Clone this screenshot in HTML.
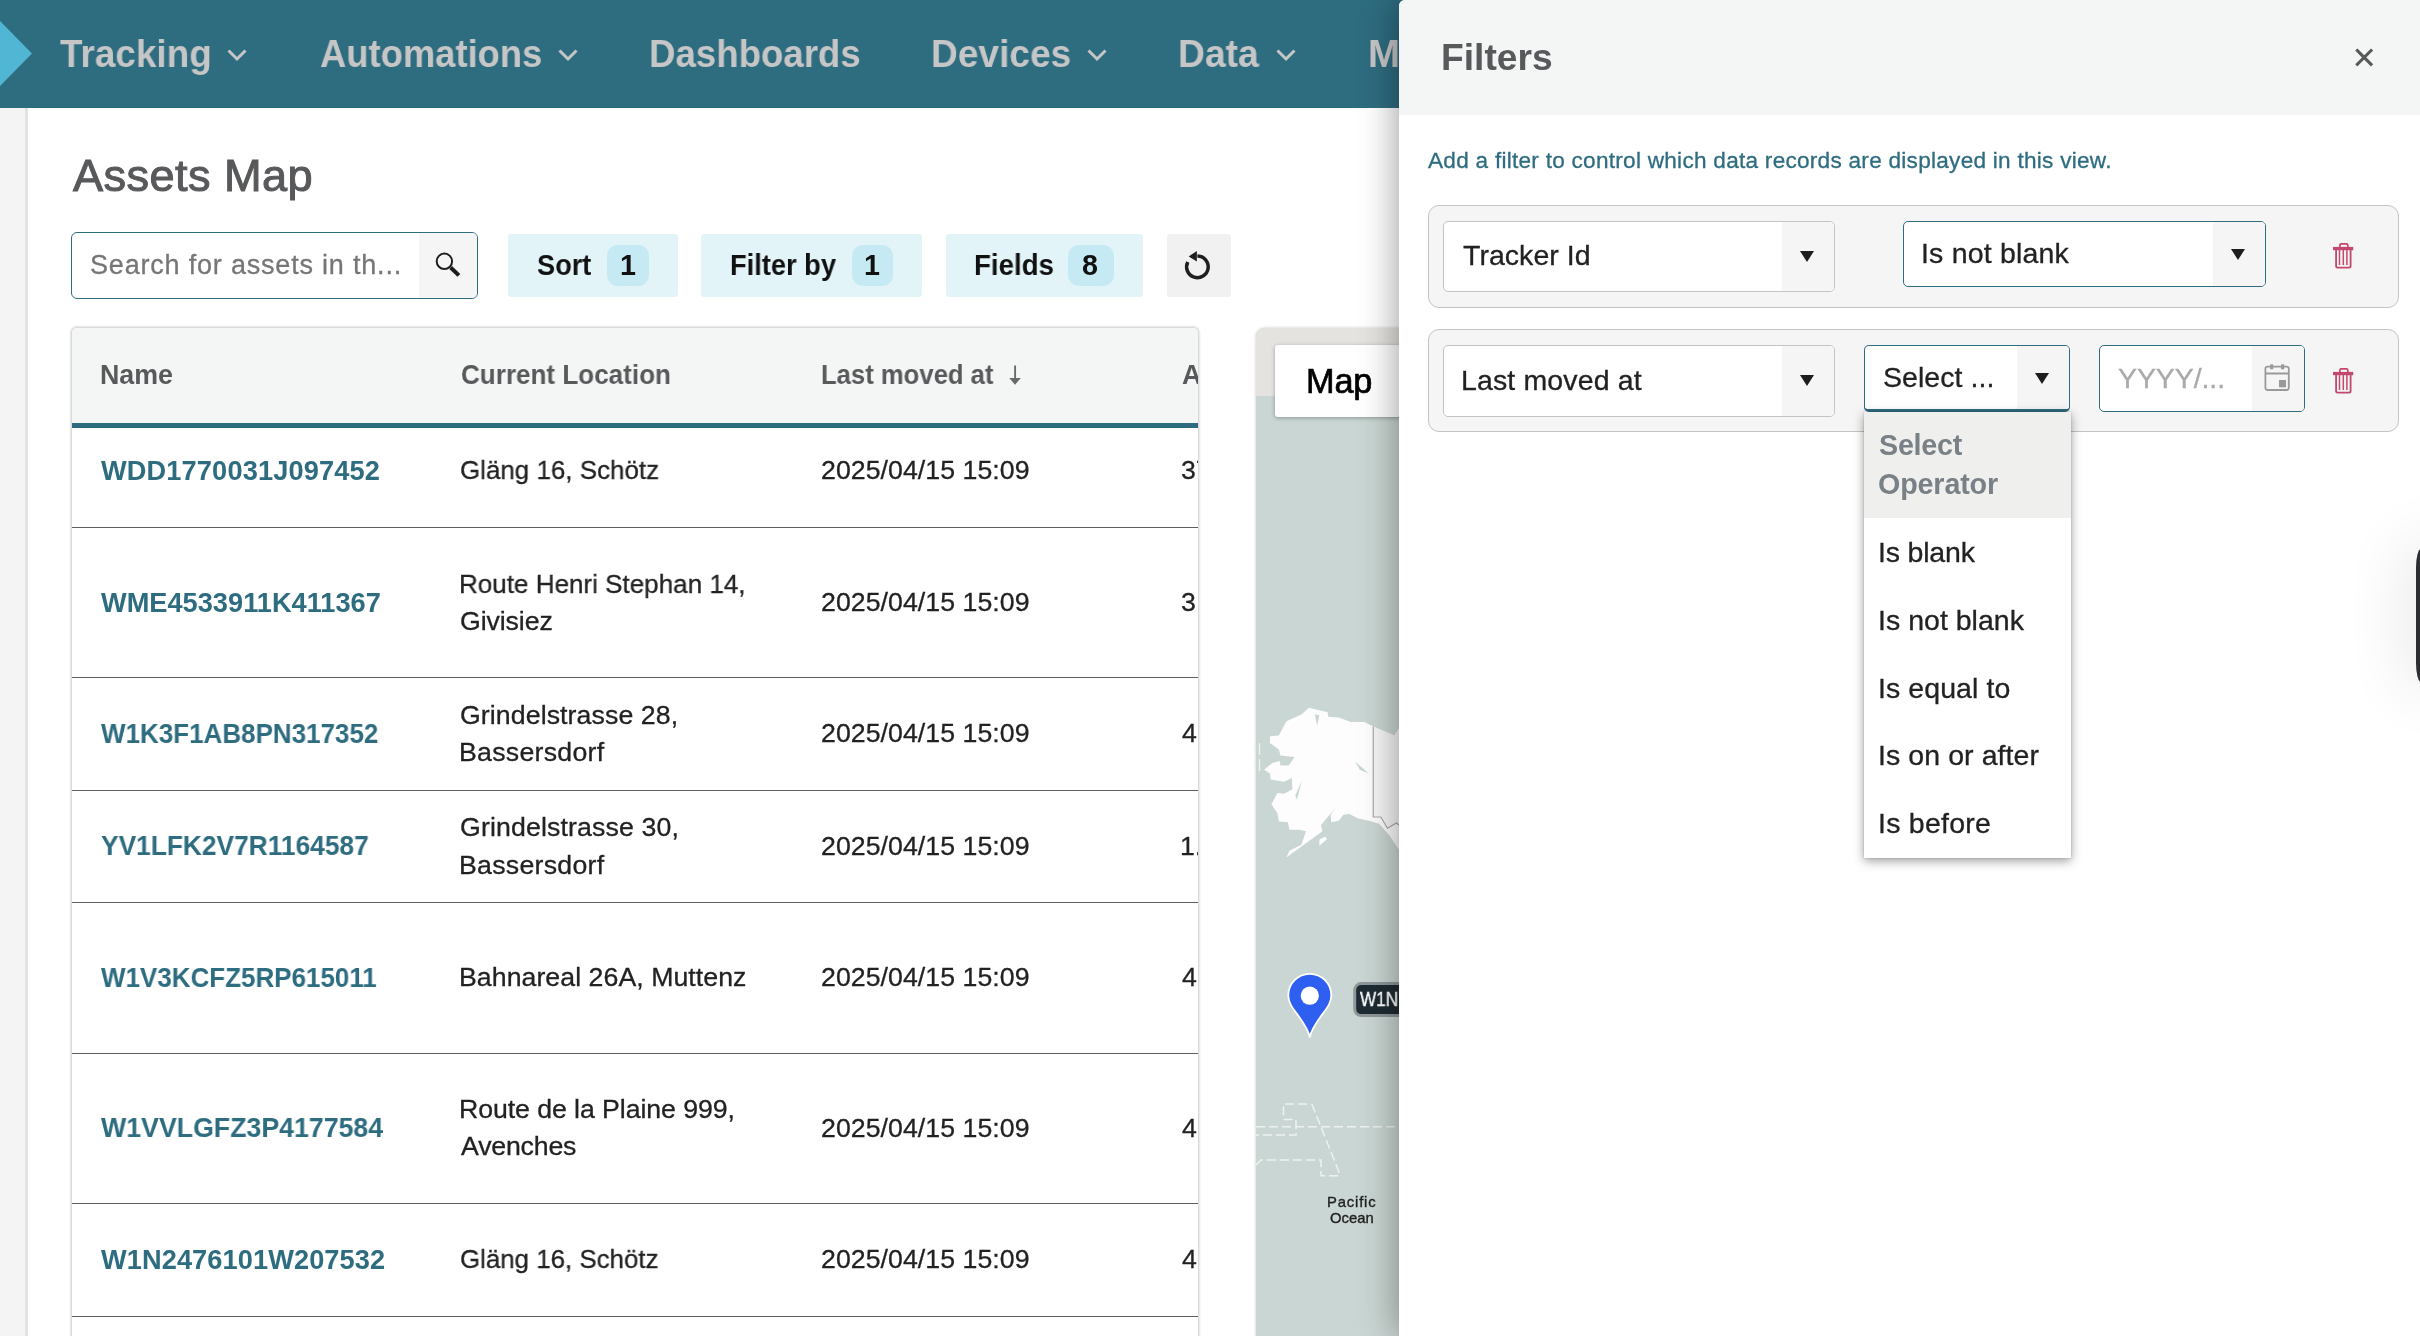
<!DOCTYPE html>
<html lang="en">
<head>
<meta charset="utf-8">
<title>Assets Map</title>
<style>
*{box-sizing:border-box;margin:0;padding:0}
html,body{width:2420px;height:1336px;overflow:hidden;background:#fff}
body{position:relative;font-family:"Liberation Sans",sans-serif;}
.t{will-change:transform;position:absolute;white-space:pre;line-height:1;font-family:"Liberation Sans",sans-serif;}
.abs{position:absolute}
#nav{position:absolute;left:0;top:0;width:2420px;height:108px;background:#2e6c80}
#side{position:absolute;left:0;top:108px;width:28px;height:1228px;background:#f4f4f4;border-right:3px solid #e3e3e3}
.btn{position:absolute;top:234px;height:63px;background:#e3f4f9;border-radius:3px}
.badge{position:absolute;top:11px;height:41px;background:#c6eaf3;border-radius:11px}
#tbl{position:absolute;left:72px;top:328px;width:1126px;height:1020px;background:#fff;border-radius:5px 5px 0 0;box-shadow:0 0 0 1px #d9d9d9,0 0 2px 2px rgba(0,0,0,.11);overflow:hidden}
#thead{position:absolute;left:0;top:0;width:1126px;height:100px;background:#f4f5f5;border-bottom:5px solid #2e6c80}
.rl{position:absolute;left:0;width:1126px;height:1px;background:#5f5f5f}
#map{position:absolute;left:1256px;top:328px;width:300px;height:1020px;background:#cad6d3;border-radius:9px 0 0 0;overflow:hidden;box-shadow:0 0 3px rgba(0,0,0,.25)}
#panel{position:absolute;left:1399px;top:0;width:1021px;height:1336px;background:#fff;border-radius:6px 0 0 0;box-shadow:0 0 38px rgba(0,0,0,.42);overflow:hidden}
#phead{position:absolute;left:0;top:0;width:1021px;height:115px;background:#f4f5f5}
.fbox{position:absolute;left:29px;width:971px;height:103px;background:#f5f5f5;border:1px solid #c4c4c4;border-radius:11px}
.sel{position:absolute;background:#fff;border:1px solid #c4c4c4;border-radius:5px;overflow:hidden}
.sel.act{border-color:#2e6c80}
.sel .ar{position:absolute;top:0;right:0;bottom:0;background:#f5f5f5}
.tri{position:absolute;width:0;height:0;border-left:7.5px solid transparent;border-right:7.5px solid transparent;border-top:11px solid #1d1d1d}
#dd{position:absolute;left:465px;top:412px;width:207px;height:446px;background:#fff;box-shadow:0 3px 10px rgba(0,0,0,.38),0 0 2px rgba(0,0,0,.2)}
#ddh{position:absolute;left:0;top:0;width:207px;height:106px;background:#efefee}
</style>
</head>
<body>
<!-- ===== top navigation ===== -->
<div id="nav">
  <svg class="abs" style="left:0;top:0" width="40" height="108" viewBox="0 0 40 108"><polygon points="0,21 32,53.5 0,86" fill="#50b6d4"/></svg>
  <svg class="abs" style="left:226px;top:46.5px" width="22" height="16" viewBox="0 0 22 16"><polyline points="2.5,3.5 11,12 19.5,3.5" fill="none" stroke="#c6c6c6" stroke-width="3"/></svg>
  <svg class="abs" style="left:557px;top:46.5px" width="22" height="16" viewBox="0 0 22 16"><polyline points="2.5,3.5 11,12 19.5,3.5" fill="none" stroke="#c6c6c6" stroke-width="3"/></svg>
  <svg class="abs" style="left:1086px;top:46.5px" width="22" height="16" viewBox="0 0 22 16"><polyline points="2.5,3.5 11,12 19.5,3.5" fill="none" stroke="#c6c6c6" stroke-width="3"/></svg>
  <svg class="abs" style="left:1275px;top:46.5px" width="22" height="16" viewBox="0 0 22 16"><polyline points="2.5,3.5 11,12 19.5,3.5" fill="none" stroke="#c6c6c6" stroke-width="3"/></svg>
</div>
<div id="side"></div>

<!-- ===== search + toolbar ===== -->
<div class="abs" style="left:71px;top:232px;width:407px;height:67px;border:1px solid #2e6c80;border-radius:6px;background:#fff;overflow:hidden">
  <div class="abs" style="right:0;top:0;width:58px;height:65px;background:#f5f5f5"></div>
  <svg class="abs" style="left:360px;top:16px" width="30" height="30" viewBox="0 0 30 30"><circle cx="12.4" cy="12.3" r="7.7" fill="none" stroke="#1d1d1d" stroke-width="2"/><line x1="18.6" y1="18.5" x2="26.9" y2="26.4" stroke="#1d1d1d" stroke-width="4"/></svg>
</div>
<div class="btn" style="left:508px;width:170px"><div class="badge" style="left:99px;width:42px"></div></div>
<div class="btn" style="left:701px;width:221px"><div class="badge" style="left:151px;width:41px"></div></div>
<div class="btn" style="left:946px;width:197px"><div class="badge" style="left:122px;width:46px"></div></div>
<div class="btn" style="left:1167px;width:64px;background:#f1f1f1">
  <svg class="abs" style="left:0;top:0" width="64" height="63" viewBox="0 0 64 63"><path d="M20.78 28 A10.8 10.8 0 1 0 30.4 22.1" fill="none" stroke="#1f1f1f" stroke-width="3.5"/><polygon points="21.7,22.4 29.9,17 29.9,27.6" fill="#1f1f1f"/></svg>
</div>

<!-- ===== table ===== -->
<div id="tbl">
  <div id="thead"></div>
  <svg class="abs" style="left:930px;top:30px" width="28" height="32" viewBox="930 30 28 32"><path d="M943.1 37.5 V51" stroke="#68696b" stroke-width="1.9" fill="none"/><polygon points="937.2,50 948.9,50 943.05,56.7" fill="#68696b"/></svg>
  <div class="rl" style="top:199px"></div>
  <div class="rl" style="top:349px"></div>
  <div class="rl" style="top:462px"></div>
  <div class="rl" style="top:574px"></div>
  <div class="rl" style="top:725px"></div>
  <div class="rl" style="top:875px"></div>
  <div class="rl" style="top:988px"></div>
<span class="t" style="left:1110.00px;top:33.81px;font-size:26.8px;font-weight:700;color:#58595b;">Asset</span>
<span class="t" style="left:1109.00px;top:129.40px;font-size:26.7px;font-weight:400;color:#222;-webkit-text-stroke:0.3px #222;">37</span>
<span class="t" style="left:1109.00px;top:261.10px;font-size:26.7px;font-weight:400;color:#222;-webkit-text-stroke:0.3px #222;">3 </span>
<span class="t" style="left:1110.00px;top:392.40px;font-size:26.7px;font-weight:400;color:#222;-webkit-text-stroke:0.3px #222;">4 </span>
<span class="t" style="left:1108.00px;top:504.90px;font-size:26.7px;font-weight:400;color:#222;-webkit-text-stroke:0.3px #222;">1.5</span>
<span class="t" style="left:1110.00px;top:636.20px;font-size:26.7px;font-weight:400;color:#222;-webkit-text-stroke:0.3px #222;">4 </span>
<span class="t" style="left:1110.00px;top:786.70px;font-size:26.7px;font-weight:400;color:#222;-webkit-text-stroke:0.3px #222;">4 </span>
<span class="t" style="left:1110.00px;top:918.40px;font-size:26.7px;font-weight:400;color:#222;-webkit-text-stroke:0.3px #222;">4 </span>
</div>

<!-- ===== map ===== -->
<div id="map">
  <div class="abs" style="left:0;top:0;width:300px;height:68px;background:#e5e3df"></div>
  <svg class="abs" style="left:0;top:0" width="300" height="1020" viewBox="1256 328 300 1020">
    <polygon points="1308.9,707.7 1327.6,712.2 1328.3,716.7 1338.8,717.4 1350.8,721.9 1364.3,721.9 1373.3,726.4 1394.2,735.4 1398.7,728.7 1419.7,724.9 1419.7,874.7 1398.7,849.2 1389.7,835.7 1379.3,823.8 1368.8,820.8 1358.3,818.5 1349.3,814.0 1343.3,814.8 1338.8,820.8 1331.3,822.3 1330.6,814.8 1335.8,807.3 1320.9,825.3 1322.4,831.2 1286.4,857.4 1289.4,850.7 1301.4,844.7 1305.9,831.2 1299.9,829.7 1289.4,829.7 1287.9,822.3 1278.9,821.5 1277.4,813.3 1271.4,804.3 1277.4,793.1 1284.2,793.8 1292.4,789.3 1291.7,778.1 1284.2,781.8 1270.7,779.6 1269.9,773.6 1264.0,769.8 1272.2,763.1 1279.7,760.9 1280.4,765.4 1288.7,765.4 1294.7,757.1 1280.4,755.6 1278.9,749.6 1269.9,742.9 1269.9,736.2 1278.9,735.4 1286.4,721.2 1301.4,714.4" fill="#fdfdfd"/>
    <polygon points="1319.4,839.5 1325.4,836.5 1326.9,839.5 1319.4,845.5" fill="#fdfdfd"/>
    <polygon points="1373.3,726.4 1394.2,735.4 1398.7,728.7 1419.7,724.9 1419.7,874.7 1398.7,849.2 1396.5,843.2 1398.7,825.3 1396.5,823.0 1387.5,828.2 1380.8,817.0 1373.3,817.0" fill="#f6f6f6"/>
    <polygon points="1314.9,714.4 1319.4,715.2 1317.1,725.7" fill="#cad6d3"/>
    <polygon points="1355.3,761.6 1368.8,773.6 1359.8,769.8" fill="#cad6d3"/>
    <polygon points="1302.1,780.3 1296.9,799.8 1295.4,795.3" fill="#cad6d3"/>
    <polyline points="1373.3,726.4 1373.3,817.0 1380.8,817.0 1387.5,828.2 1396.5,823.0 1400.2,826.0" fill="none" stroke="#a9a9a9" stroke-width="1.2"/>
    <path d="M1259.5 743 V755 M1259.5 759 V771" stroke="#eef2f1" stroke-width="1.4" fill="none"/>
    <path d="M1256 1126.7 H1420" fill="none" stroke="#edf2f0" stroke-width="1.5" stroke-dasharray="9 4"/>
    <path d="M1307 1104 H1283.5 V1119.5 H1296 V1135 H1256" fill="none" stroke="#edf2f0" stroke-width="1.5" stroke-dasharray="9 4"/>
    <path d="M1311.8 1104 L1340.5 1175.8" fill="none" stroke="#edf2f0" stroke-width="1.5" stroke-dasharray="9 4"/>
    <path d="M1256 1165 L1261 1160 H1321 V1175.8 H1340.5" fill="none" stroke="#edf2f0" stroke-width="1.5" stroke-dasharray="9 4"/>
    <path d="M1309.8 1037.2 C1308.3 1029.5 1303.5 1023 1298.5 1016 C1293.5 1009 1288.3 1003.5 1288.3 995.3 A21.5 21.5 0 1 1 1331.3 995.3 C1331.3 1003.5 1326.1 1009 1321.1 1016 C1316.1 1023 1311.3 1029.5 1309.8 1037.2 Z" fill="#2e5ff0" stroke="#fff" stroke-width="1.8" stroke-linejoin="round"/>
    <circle cx="1309.8" cy="995.7" r="9.1" fill="#fff"/>
    <rect x="1354.7" y="983.6" width="80" height="32" rx="6.5" fill="#1e2b33" stroke="#8f979b" stroke-width="3"/>
  </svg>
  <div class="abs" style="left:19px;top:17px;width:200px;height:72px;background:#fff;border-radius:3px;box-shadow:0 1px 4px rgba(0,0,0,.3)"></div>
</div>

<span class="t" style="left:59.80px;top:35.49px;font-size:38.4px;font-weight:700;color:#c6c6c6;transform-origin:0 0;transform:scaleX(0.9611);">Tracking</span>
<span class="t" style="left:320.00px;top:35.49px;font-size:38.4px;font-weight:700;color:#c6c6c6;transform-origin:0 0;transform:scaleX(0.9475);">Automations</span>
<span class="t" style="left:649.09px;top:35.49px;font-size:38.4px;font-weight:700;color:#c6c6c6;transform-origin:0 0;transform:scaleX(0.9541);">Dashboards</span>
<span class="t" style="left:931.07px;top:35.49px;font-size:38.4px;font-weight:700;color:#c6c6c6;transform-origin:0 0;transform:scaleX(0.9662);">Devices</span>
<span class="t" style="left:1178.06px;top:35.49px;font-size:38.4px;font-weight:700;color:#c6c6c6;transform-origin:0 0;transform:scaleX(0.9712);">Data</span>
<span class="t" style="left:1368.00px;top:35.49px;font-size:38.4px;font-weight:700;color:#c6c6c6;">More</span>
<span class="t" style="left:72.60px;top:153.24px;font-size:45.2px;font-weight:400;color:#58595b;letter-spacing:0.396px;-webkit-text-stroke:1px #58595b;">Assets Map</span>
<span class="t" style="left:90.15px;top:251.54px;font-size:27px;font-weight:400;color:#767676;letter-spacing:0.803px;-webkit-text-stroke:0.3px #767676;">Search for assets in th...</span>
<span class="t" style="left:537.00px;top:250.71px;font-size:28.7px;font-weight:700;color:#111;transform-origin:0 0;transform:scaleX(0.9460);">Sort</span>
<span class="t" style="left:619.50px;top:250.71px;font-size:28.7px;font-weight:700;color:#111;letter-spacing:0.000px;">1</span>
<span class="t" style="left:729.65px;top:250.71px;font-size:28.7px;font-weight:700;color:#111;transform-origin:0 0;transform:scaleX(0.9500);">Filter by</span>
<span class="t" style="left:864.00px;top:250.71px;font-size:28.7px;font-weight:700;color:#111;letter-spacing:0.000px;">1</span>
<span class="t" style="left:974.04px;top:250.71px;font-size:28.7px;font-weight:700;color:#111;transform-origin:0 0;transform:scaleX(0.9637);">Fields</span>
<span class="t" style="left:1082.00px;top:250.71px;font-size:28.7px;font-weight:700;color:#111;letter-spacing:0.000px;">8</span>
<span class="t" style="left:100.00px;top:361.81px;font-size:26.8px;font-weight:700;color:#58595b;letter-spacing:-0.027px;">Name</span>
<span class="t" style="left:461.03px;top:361.81px;font-size:26.8px;font-weight:700;color:#58595b;transform-origin:0 0;transform:scaleX(0.9724);">Current Location</span>
<span class="t" style="left:821.04px;top:361.81px;font-size:26.8px;font-weight:700;color:#58595b;transform-origin:0 0;transform:scaleX(0.9573);">Last moved at</span>
<span class="t" style="left:101.30px;top:456.98px;font-size:27.2px;font-weight:700;color:#2e6c80;letter-spacing:0.138px;">WDD1770031J097452</span>
<span class="t" style="left:460.18px;top:457.40px;font-size:26.7px;font-weight:400;color:#222;-webkit-text-stroke:0.3px #222;transform-origin:0 0;transform:scaleX(0.9720);">Gläng 16, Schötz</span>
<span class="t" style="left:821.15px;top:457.40px;font-size:26.7px;font-weight:400;color:#222;letter-spacing:0.052px;-webkit-text-stroke:0.3px #222;">2025/04/15 15:09</span>
<span class="t" style="left:101.30px;top:588.68px;font-size:27.2px;font-weight:700;color:#2e6c80;letter-spacing:0.011px;">WME4533911K411367</span>
<span class="t" style="left:459.20px;top:570.50px;font-size:26.7px;font-weight:400;color:#222;-webkit-text-stroke:0.3px #222;transform-origin:0 0;transform:scaleX(0.9754);">Route Henri Stephan 14,</span>
<span class="t" style="left:460.15px;top:607.70px;font-size:26.7px;font-weight:400;color:#222;letter-spacing:-0.097px;-webkit-text-stroke:0.3px #222;">Givisiez</span>
<span class="t" style="left:821.15px;top:589.10px;font-size:26.7px;font-weight:400;color:#222;letter-spacing:0.052px;-webkit-text-stroke:0.3px #222;">2025/04/15 15:09</span>
<span class="t" style="left:101.30px;top:719.98px;font-size:27.2px;font-weight:700;color:#2e6c80;transform-origin:0 0;transform:scaleX(0.9558);">W1K3F1AB8PN317352</span>
<span class="t" style="left:460.15px;top:701.80px;font-size:26.7px;font-weight:400;color:#222;letter-spacing:0.091px;-webkit-text-stroke:0.3px #222;">Grindelstrasse 28,</span>
<span class="t" style="left:459.15px;top:739.00px;font-size:26.7px;font-weight:400;color:#222;letter-spacing:0.272px;-webkit-text-stroke:0.3px #222;">Bassersdorf</span>
<span class="t" style="left:821.15px;top:720.40px;font-size:26.7px;font-weight:400;color:#222;letter-spacing:0.052px;-webkit-text-stroke:0.3px #222;">2025/04/15 15:09</span>
<span class="t" style="left:101.30px;top:832.48px;font-size:27.2px;font-weight:700;color:#2e6c80;transform-origin:0 0;transform:scaleX(0.9682);">YV1LFK2V7R1164587</span>
<span class="t" style="left:460.15px;top:814.30px;font-size:26.7px;font-weight:400;color:#222;letter-spacing:0.132px;-webkit-text-stroke:0.3px #222;">Grindelstrasse 30,</span>
<span class="t" style="left:459.15px;top:851.50px;font-size:26.7px;font-weight:400;color:#222;letter-spacing:0.272px;-webkit-text-stroke:0.3px #222;">Bassersdorf</span>
<span class="t" style="left:821.15px;top:832.90px;font-size:26.7px;font-weight:400;color:#222;letter-spacing:0.052px;-webkit-text-stroke:0.3px #222;">2025/04/15 15:09</span>
<span class="t" style="left:101.30px;top:963.78px;font-size:27.2px;font-weight:700;color:#2e6c80;transform-origin:0 0;transform:scaleX(0.9553);">W1V3KCFZ5RP615011</span>
<span class="t" style="left:459.15px;top:964.20px;font-size:26.7px;font-weight:400;color:#222;letter-spacing:0.053px;-webkit-text-stroke:0.3px #222;">Bahnareal 26A, Muttenz</span>
<span class="t" style="left:821.15px;top:964.20px;font-size:26.7px;font-weight:400;color:#222;letter-spacing:0.052px;-webkit-text-stroke:0.3px #222;">2025/04/15 15:09</span>
<span class="t" style="left:101.30px;top:1114.28px;font-size:27.2px;font-weight:700;color:#2e6c80;transform-origin:0 0;transform:scaleX(0.9826);">W1VVLGFZ3P4177584</span>
<span class="t" style="left:459.15px;top:1096.10px;font-size:26.7px;font-weight:400;color:#222;letter-spacing:-0.070px;-webkit-text-stroke:0.3px #222;">Route de la Plaine 999,</span>
<span class="t" style="left:461.15px;top:1133.30px;font-size:26.7px;font-weight:400;color:#222;letter-spacing:-0.182px;-webkit-text-stroke:0.3px #222;">Avenches</span>
<span class="t" style="left:821.15px;top:1114.70px;font-size:26.7px;font-weight:400;color:#222;letter-spacing:0.052px;-webkit-text-stroke:0.3px #222;">2025/04/15 15:09</span>
<span class="t" style="left:101.30px;top:1245.98px;font-size:27.2px;font-weight:700;color:#2e6c80;letter-spacing:0.092px;">W1N2476101W207532</span>
<span class="t" style="left:460.18px;top:1246.40px;font-size:26.7px;font-weight:400;color:#222;-webkit-text-stroke:0.3px #222;transform-origin:0 0;transform:scaleX(0.9691);">Gläng 16, Schötz</span>
<span class="t" style="left:821.15px;top:1246.40px;font-size:26.7px;font-weight:400;color:#222;letter-spacing:0.052px;-webkit-text-stroke:0.3px #222;">2025/04/15 15:09</span>
<span class="t" style="left:1306.25px;top:363.87px;font-size:34.3px;font-weight:400;color:#000;letter-spacing:-0.172px;-webkit-text-stroke:0.7px #000;">Map</span>
<span class="t" style="left:1326.58px;top:1195.27px;font-size:14.8px;font-weight:400;color:#1f1f1f;letter-spacing:0.844px;-webkit-text-stroke:0.35px #1f1f1f;">Pacific</span>
<span class="t" style="left:1329.97px;top:1211.27px;font-size:14.8px;font-weight:400;color:#1f1f1f;letter-spacing:0.021px;-webkit-text-stroke:0.35px #1f1f1f;">Ocean</span>
<span class="t" style="left:1360.00px;top:989.00px;font-size:20.2px;font-weight:400;color:#fff;-webkit-text-stroke:0.4px #fff;transform-origin:0 0;transform:scaleX(0.8503);">W1N</span>

<!-- ===== filters side panel ===== -->
<div id="panel">
  <div id="phead"></div>
  <svg class="abs" style="left:955px;top:47px" width="21" height="21" viewBox="0 0 21 21"><path d="M2.3 2.5 L18.1 18.3 M18.1 2.5 L2.3 18.3" stroke="#58595b" stroke-width="3.1" fill="none"/></svg>

  <div class="fbox" style="top:205px"></div>
  <div class="fbox" style="top:329px"></div>

  <div class="sel" style="left:44px;top:221px;width:392px;height:71px"><div class="ar" style="width:52px"></div></div>
  <div class="tri" style="left:401px;top:251px"></div>
  <div class="sel act" style="left:504px;top:221px;width:363px;height:66px"><div class="ar" style="width:52px"></div></div>
  <div class="tri" style="left:832px;top:249px"></div>

  <div class="sel" style="left:44px;top:345px;width:392px;height:72px"><div class="ar" style="width:52px"></div></div>
  <div class="tri" style="left:401px;top:375px"></div>
  <div class="sel act" style="left:465px;top:345px;width:206px;height:67px;border-bottom-width:3px"><div class="ar" style="width:52px"></div></div>
  <div class="tri" style="left:636px;top:373px"></div>
  <div class="sel act" style="left:700px;top:345px;width:206px;height:67px"><div class="ar" style="width:52px"></div>
    <svg class="abs" style="left:164px;top:18px" width="28" height="29" viewBox="0 0 28 29"><rect x="1.4" y="2.6" width="23.4" height="23.4" rx="2.2" fill="none" stroke="#9a9a9a" stroke-width="1.8"/><line x1="1.4" y1="9.5" x2="24.8" y2="9.5" stroke="#9a9a9a" stroke-width="1.8"/><rect x="6.2" y="0.3" width="3" height="5" fill="#9a9a9a"/><rect x="17" y="0.3" width="3.2" height="5" fill="#9a9a9a"/><rect x="15" y="16" width="7" height="7.3" fill="#9a9a9a"/></svg>
  </div>

  <svg class="abs" style="left:934px;top:243.3px" width="21" height="26" viewBox="0 0 21 26"><rect x="0" y="3.9" width="20.2" height="3.3" fill="#c4476e"/><path d="M6.9 4.2 V2.3 a1.5 1.5 0 0 1 1.5 -1.5 H13.3 a1.5 1.5 0 0 1 1.5 1.5 V4.2" fill="none" stroke="#c4476e" stroke-width="1.7"/><path d="M3.1 7 V23 a1.6 1.6 0 0 0 1.6 1.6 H16 a1.6 1.6 0 0 0 1.6 -1.6 V7" fill="none" stroke="#c4476e" stroke-width="1.8"/><path d="M6.5 7 V21.9 M10.3 7 V21.9 M13.9 7 V21.9" fill="none" stroke="#c4476e" stroke-width="1.5"/></svg>
  <svg class="abs" style="left:934px;top:367.5px" width="21" height="26" viewBox="0 0 21 26"><rect x="0" y="3.9" width="20.2" height="3.3" fill="#c4476e"/><path d="M6.9 4.2 V2.3 a1.5 1.5 0 0 1 1.5 -1.5 H13.3 a1.5 1.5 0 0 1 1.5 1.5 V4.2" fill="none" stroke="#c4476e" stroke-width="1.7"/><path d="M3.1 7 V23 a1.6 1.6 0 0 0 1.6 1.6 H16 a1.6 1.6 0 0 0 1.6 -1.6 V7" fill="none" stroke="#c4476e" stroke-width="1.8"/><path d="M6.5 7 V21.9 M10.3 7 V21.9 M13.9 7 V21.9" fill="none" stroke="#c4476e" stroke-width="1.5"/></svg>

  <div id="dd"><div id="ddh"></div></div>

  <div class="abs" style="left:1016.5px;top:549px;width:20px;height:133px;background:#2b2d31;border-radius:5px 0 0 5px / 19px 0 0 19px;box-shadow:0 0 60px 10px rgba(0,0,0,.10)"></div>
<span class="t" style="left:42.00px;top:38.51px;font-size:37.2px;font-weight:700;color:#58595b;letter-spacing:0.014px;">Filters</span>
<span class="t" style="left:29.15px;top:149.87px;font-size:22.6px;font-weight:400;color:#2e6c80;letter-spacing:0.259px;-webkit-text-stroke:0.3px #2e6c80;">Add a filter to control which data records are displayed in this view.</span>
<span class="t" style="left:64.15px;top:240.87px;font-size:28.5px;font-weight:400;color:#222;letter-spacing:0.037px;-webkit-text-stroke:0.3px #222;">Tracker Id</span>
<span class="t" style="left:521.85px;top:239.37px;font-size:28.5px;font-weight:400;color:#222;letter-spacing:0.190px;-webkit-text-stroke:0.3px #222;">Is not blank</span>
<span class="t" style="left:62.15px;top:365.57px;font-size:28.5px;font-weight:400;color:#222;letter-spacing:0.134px;-webkit-text-stroke:0.3px #222;">Last moved at</span>
<span class="t" style="left:484.05px;top:362.87px;font-size:28.5px;font-weight:400;color:#222;letter-spacing:0.059px;-webkit-text-stroke:0.3px #222;">Select ...</span>
<span class="t" style="left:719.15px;top:363.87px;font-size:28.5px;font-weight:400;color:#aaaaaa;letter-spacing:-0.085px;-webkit-text-stroke:0.3px #aaaaaa;">YYYY/...</span>
<span class="t" style="left:480.00px;top:430.71px;font-size:28.7px;font-weight:700;color:#798187;letter-spacing:-0.254px;">Select</span>
<span class="t" style="left:479.00px;top:469.71px;font-size:28.7px;font-weight:700;color:#798187;letter-spacing:-0.141px;">Operator</span>
<span class="t" style="left:479.15px;top:538.07px;font-size:28.5px;font-weight:400;color:#222;letter-spacing:-0.181px;-webkit-text-stroke:0.3px #222;">Is blank</span>
<span class="t" style="left:479.15px;top:605.87px;font-size:28.5px;font-weight:400;color:#222;letter-spacing:0.018px;-webkit-text-stroke:0.3px #222;">Is not blank</span>
<span class="t" style="left:479.15px;top:673.87px;font-size:28.5px;font-weight:400;color:#222;letter-spacing:0.074px;-webkit-text-stroke:0.3px #222;">Is equal to</span>
<span class="t" style="left:479.15px;top:740.87px;font-size:28.5px;font-weight:400;color:#222;letter-spacing:0.077px;-webkit-text-stroke:0.3px #222;">Is on or after</span>
<span class="t" style="left:479.15px;top:808.87px;font-size:28.5px;font-weight:400;color:#222;letter-spacing:0.257px;-webkit-text-stroke:0.3px #222;">Is before</span>
</div>
</body>
</html>
